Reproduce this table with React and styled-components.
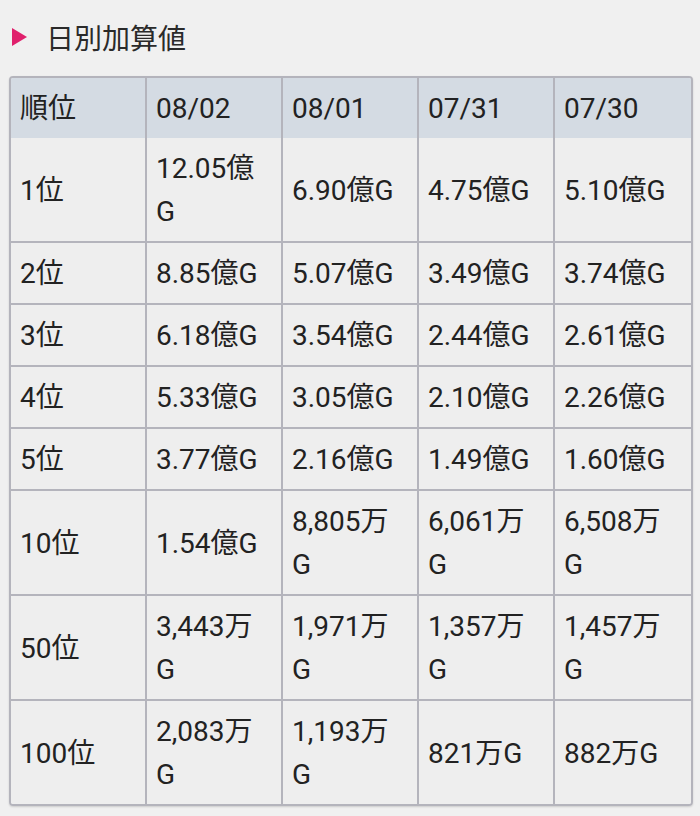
import React from 'react';
import styled, { createGlobalStyle } from 'styled-components';

const GlobalStyle = createGlobalStyle`
	html, body {
		margin: 0;
		padding: 0;
		background: #f0f0f0;
	}
	body {
		font-family: Roboto, "Noto Sans CJK JP", sans-serif;
		color: #222;
	}
`;

const Page = styled.div`
	padding: 17px 7px 10px 9px;
`;

const Heading = styled.h2`
	display: flex;
	align-items: center;
	margin: 0 0 19px;
	font-size: 28px;
	font-weight: 400;
	color: #2a2a2a;
	height: 40px;
`;

const Marker = styled.span`
	width: 0;
	height: 0;
	margin: 0 19px 0 3px;
	border-top: 9px solid transparent;
	border-bottom: 9px solid transparent;
	border-left: 15px solid #e0206c;
`;

const Table = styled.table`
	width: 684px;
	table-layout: fixed;
	border-collapse: separate;
	border-spacing: 0;
	border: 2px solid #b4b4bc;
	border-radius: 4px;
	overflow: hidden;
	box-shadow: 0 1px 2px rgba(0, 0, 0, 0.15);
	font-size: 28px;
	line-height: 43px;
`;

const Cell = styled.td`
	background: ${(props) => (props.head ? '#d4dbe3' : '#eeeeee')};
	padding: 9px 20px 8px 9px;
	border-right: 2px solid #b4b4bc;
	border-bottom: 2px solid #b4b4bc;
	vertical-align: middle;
	text-align: left;
	font-weight: 400;
	word-break: break-all;
	&:last-child {
		border-right: none;
	}
	tr:last-child > & {
		border-bottom: none;
	}
`;

const dates = ['08/02', '08/01', '07/31', '07/30'];

const rows = [
	['1位', '12.05億G', '6.90億G', '4.75億G', '5.10億G'],
	['2位', '8.85億G', '5.07億G', '3.49億G', '3.74億G'],
	['3位', '6.18億G', '3.54億G', '2.44億G', '2.61億G'],
	['4位', '5.33億G', '3.05億G', '2.10億G', '2.26億G'],
	['5位', '3.77億G', '2.16億G', '1.49億G', '1.60億G'],
	['10位', '1.54億G', '8,805万G', '6,061万G', '6,508万G'],
	['50位', '3,443万G', '1,971万G', '1,357万G', '1,457万G'],
	['100位', '2,083万G', '1,193万G', '821万G', '882万G']
];

const App = () => (
	<React.Fragment>
		<GlobalStyle />
		<Page>
			<Heading>
				<Marker />
				日別加算値
			</Heading>
			<Table>
				<thead>
					<tr>
						<Cell as="th" head>
							順位
						</Cell>
						{dates.map((d) => (
							<Cell as="th" head key={d}>
								{d}
							</Cell>
						))}
					</tr>
				</thead>
				<tbody>
					{rows.map((row) => (
						<tr key={row[0]}>
							{row.map((v, i) => (
								<Cell key={i}>{v}</Cell>
							))}
						</tr>
					))}
				</tbody>
			</Table>
		</Page>
	</React.Fragment>
);

export default App;
